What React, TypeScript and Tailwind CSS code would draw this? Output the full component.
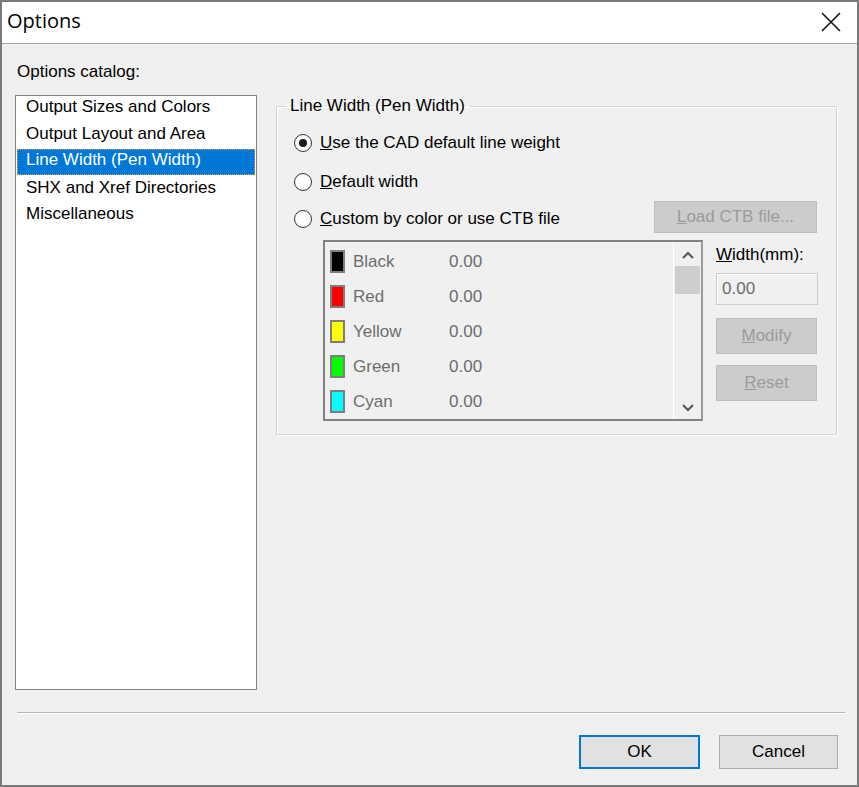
import React from "react";

const catalog = [
  "Output Sizes and Colors",
  "Output Layout and Area",
  "Line Width (Pen Width)",
  "SHX and Xref Directories",
  "Miscellaneous",
];

const pens = [
  { name: "Black", color: "bg-[#000000]" },
  { name: "Red", color: "bg-[#ff0000]" },
  { name: "Yellow", color: "bg-[#ffff00]" },
  { name: "Green", color: "bg-[#00ff00]" },
  { name: "Cyan", color: "bg-[#00ffff]" },
];

const Radio: React.FC<{ checked?: boolean; children: React.ReactNode }> = ({
  checked,
  children,
}) => (
  <div className="flex items-center h-[20px]">
    <span className="w-[18px] h-[18px] rounded-full border border-[#333333] bg-white flex items-center justify-center">
      {checked && <span className="w-[8px] h-[8px] rounded-full bg-[#1a1a1a]" />}
    </span>
    <span className="ml-[8px] text-[#000000]">{children}</span>
  </div>
);

const DisabledButton: React.FC<{ className?: string; children: React.ReactNode }> = ({
  className,
  children,
}) => (
  <div
    className={
      "flex items-center justify-center bg-[#cccccc] border border-[#bfbfbf] text-[#9b9b9b] shrink-0 " +
      (className ?? "")
    }
  >
    {children}
  </div>
);

export default function App() {
  return (
    <div className="w-[859px] h-[787px] bg-[#f0f0f0] border-2 border-[#7a7a7a] flex flex-col font-['Liberation_Sans',Arial,sans-serif] text-[17px] leading-[20px] text-black">
      {/* title bar */}
      <div className="h-[42px] bg-white border-b border-[#a8a8a8] flex items-center justify-between pl-[5px] pr-[16px] shrink-0">
        <span className="font-['Open_Sans',sans-serif] text-[20px] leading-[24px] mb-[3px] text-black">
          Options
        </span>
        <svg width="20" height="20" viewBox="0 0 20 20" className="mb-[2px]">
          <path d="M1 1 L19 19 M19 1 L1 19" stroke="#111" strokeWidth="1.6" />
        </svg>
      </div>

      {/* body */}
      <div className="flex-1 flex flex-col px-[13px]">
        <div className="mt-[18px] ml-[2px]">Options catalog:</div>
        <div className="flex mt-[13px]">
          {/* catalog list */}
          <div className="w-[242px] h-[595px] bg-white border border-[#828282] px-[1px]">
            {catalog.map((item, i) =>
              i === 2 ? (
                <div
                  key={item}
                  className="h-[26.75px] mt-[-1px] mb-[1px] flex items-center pl-[8px] pb-[3px] bg-[#0078d7] text-white border border-dotted border-[#e8a050]"
                >
                  {item}
                </div>
              ) : (
                <div key={item} className="h-[26.75px] flex items-center pl-[9px] pb-[4px]">
                  {item}
                </div>
              )
            )}
          </div>

          {/* group box */}
          <fieldset className="ml-[19px] mt-[1px] w-[560px] h-[339px] border border-[#d5d5d5] shadow-[inset_1px_1px_0_#ffffff,1px_1px_0_#ffffff] pl-[17px] pr-[18px]">
            <legend className="ml-[-8px] px-[4px] leading-[20px]">Line Width (Pen Width)</legend>
            <div className="flex flex-col mt-[17px]">
              <Radio checked>
                <u>U</u>se the CAD default line weight
              </Radio>
              <div className="mt-[19px]">
                <Radio>
                  <u>D</u>efault width
                </Radio>
              </div>
              <div className="mt-[17px] h-[20px] flex items-center justify-between">
                <Radio>
                  <u>C</u>ustom by color or use CTB file
                </Radio>
                <DisabledButton className="w-[163px] h-[32px] mr-[1px] mt-[-4px]">
                  <span>
                    <u>L</u>oad CTB file...
                  </span>
                </DisabledButton>
              </div>

              <div className="flex mt-[11px] pl-[29px]">
                {/* pen list */}
                <div className="w-[380px] h-[181px] border-2 border-[#828282] border-r-[#9a9a9a] flex">
                  <div className="flex-1 flex flex-col pt-[2px] pl-[5px]">
                    {pens.map((p) => (
                      <div
                        key={p.name}
                        className="h-[35px] shrink-0 flex items-center text-[#6d6d6d]"
                      >
                        <span className={"w-[15px] h-[23px] border-2 border-[#7d7d7d] " + p.color} />
                        <span className="ml-[8px] w-[96px]">{p.name}</span>
                        <span>0.00</span>
                      </div>
                    ))}
                  </div>
                  <div className="w-[28px] border-l border-white flex flex-col items-center">
                    <svg className="mt-[8px]" width="14" height="10" viewBox="0 0 14 10">
                      <path d="M2 8 L7 3 L12 8" fill="none" stroke="#555" strokeWidth="2" />
                    </svg>
                    <div className="w-[25px] h-[28px] bg-[#cdcdcd] mt-[6px]" />
                    <div className="flex-1" />
                    <svg className="mb-[6px]" width="14" height="10" viewBox="0 0 14 10">
                      <path d="M2 2 L7 7 L12 2" fill="none" stroke="#555" strokeWidth="2" />
                    </svg>
                  </div>
                </div>

                {/* width controls */}
                <div className="ml-[13px] flex flex-col">
                  <div className="mt-[5px]">
                    <u>W</u>idth(mm):
                  </div>
                  <div className="mt-[8px] w-[102px] h-[32px] border border-[#cccccc] shadow-[inset_1px_1px_0_#ffffff] flex items-center pl-[5px] text-[#6d6d6d]">
                    0.00
                  </div>
                  <DisabledButton className="mt-[13px] w-[101px] h-[36px]">
                    <span>
                      <u>M</u>odify
                    </span>
                  </DisabledButton>
                  <DisabledButton className="mt-[11px] w-[101px] h-[36px]">
                    <span>
                      <u>R</u>eset
                    </span>
                  </DisabledButton>
                </div>
              </div>
            </div>
          </fieldset>
        </div>

        {/* separator */}
        <div className="mt-[22px] ml-[2px] mr-[-1px] h-[2px] bg-[#b4b4b4] border-b border-white" />

        {/* buttons */}
        <div className="flex justify-end mt-[21px] mr-[6px] gap-[19px]">
          <div className="w-[121px] h-[34px] border-2 border-[#0078d7] bg-[#e1e1e1] flex items-center justify-center">
            OK
          </div>
          <div className="w-[119px] h-[34px] border border-[#adadad] bg-[#e1e1e1] flex items-center justify-center">
            Cancel
          </div>
        </div>
      </div>
    </div>
  );
}
